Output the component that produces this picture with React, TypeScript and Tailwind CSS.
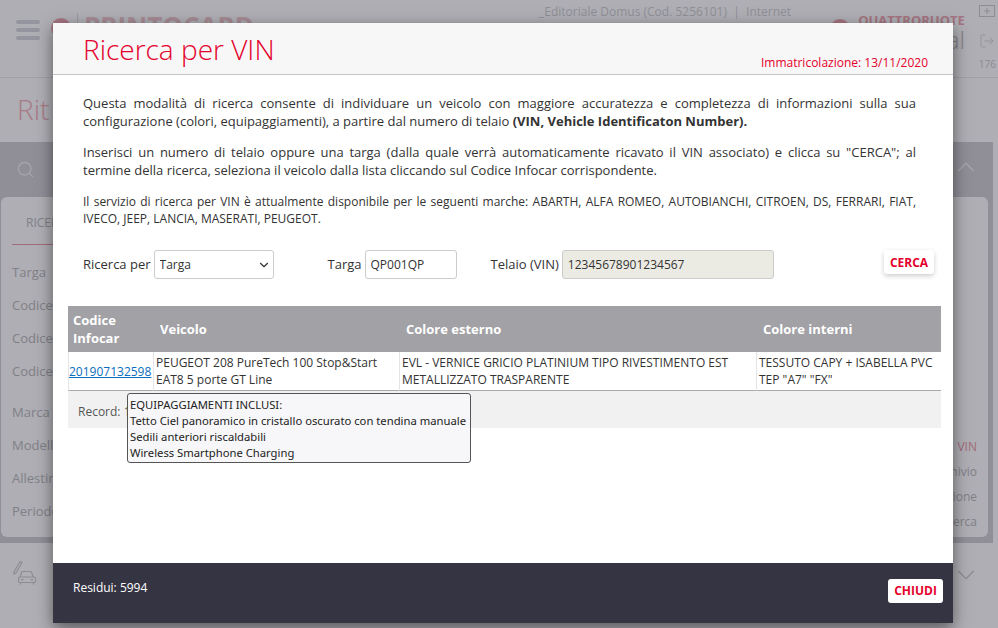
import { ChevronDown, ChevronUp, Search, LogOut } from 'lucide-react';

const leftLabels = [
  { text: 'Targa', gap: 'mt-[16px]' },
  { text: 'Codice', gap: 'mt-[11px]' },
  { text: 'Codice', gap: 'mt-[11px]' },
  { text: 'Codice', gap: 'mt-[11px]' },
  { text: 'Marca', gap: 'mt-[19px]' },
  { text: 'Modello', gap: 'mt-[11px]' },
  { text: 'Allestimento', gap: 'mt-[11px]' },
  { text: 'Periodo', gap: 'mt-[11px]' },
];

function CarPenIcon() {
  return (
    <svg width="26" height="26" viewBox="0 0 26 26" fill="none" stroke="currentColor" strokeWidth="1.2">
      <path d="M1 12 L7 1.5 L9 2.6 L3 13 L1 14 Z" />
      <path d="M7 17 L9 11.5 H18 L20.5 17" />
      <rect x="5.5" y="17" width="17" height="5.5" rx="1.5" />
      <path d="M7.5 22.5 V24.5 M20.5 22.5 V24.5 M8 19.7 H10.5 M17.5 19.7 H20" />
    </svg>
  );
}

function PlusBoxIcon() {
  return (
    <svg width="16" height="12" viewBox="0 0 16 12" fill="none" stroke="currentColor" strokeWidth="1">
      <rect x="0.5" y="0.5" width="15" height="11" />
      <path d="M8 3 V9 M5 6 H11" />
    </svg>
  );
}

function BackgroundPage() {
  return (
    <div className="h-[628px] w-[998px] overflow-hidden bg-white text-[#b4b4b4]">
      {/* top bar */}
      <div className="flex h-[78px] border-b border-[#e8e8e8]">
        <div className="ml-4 mt-5 flex w-6 flex-col gap-[4px]">
          <div className="h-1 rounded-sm bg-[#d6d6dc]" />
          <div className="h-1 rounded-sm bg-[#d6d6dc]" />
          <div className="h-1 rounded-sm bg-[#d6d6dc]" />
        </div>
        <div className="ml-[11px] mt-[18px] h-[20px] w-[20px] rounded-full bg-[#f0a0aa]" />
        <div className="ml-[6px] mt-[13px] h-[24px] w-px bg-[#ddd]" />
        <div className="ml-[6px] mt-[10px] text-[26px] font-bold leading-[32px] text-[#f0c4ca]">PRINTOCARD</div>
        <div className="ml-auto mt-[19px] h-[20px] w-[20px] rounded-full bg-[#f0a0aa]" />
        <div className="ml-[8px] flex flex-col items-end pt-[12px]">
          <span className="text-[13px] font-bold leading-[16px] text-[#f0a0aa]">QUATTRORUOTE</span>
          <span className="text-[24px] font-light leading-[24px]">Digital</span>
        </div>
        <div className="ml-[14px] mr-[2px] flex flex-col items-center pt-[5px] text-[#c8c8c8]">
          <PlusBoxIcon />
          <LogOut size={16} strokeWidth={1.2} className="mt-[16px]" />
          <span className="mt-[8px] text-[10px]">176</span>
        </div>
      </div>
      <div className="h-[64px] pl-[17px] pt-[11px] text-[28px] font-light leading-[40px] text-[#f5aab4]">Rit</div>
      {/* search panel */}
      <div className="h-[401px] w-[993px] bg-[#cdcbd0]">
        <div className="flex h-[55px] items-center justify-between pl-[16px] pr-[12px] text-[#f2f2f2]">
          <Search size={19} strokeWidth={1.5} />
          <ChevronUp size={30} strokeWidth={1} className="mb-[5px]" />
        </div>
        <div className="ml-px flex h-[340px] w-[987px] justify-between rounded-md bg-white">
          <div className="pl-[11px]">
            <div className="ml-[14px] pt-[15px] text-[12px] leading-[22px]">RICERCA</div>
            <div className="mt-[10px] h-px w-[150px] bg-[#eb909c]" />
            {leftLabels.map((l, i) => (
              <div key={i} className={`${l.gap} text-[13px] leading-[22px]`}>{l.text}</div>
            ))}
          </div>
          <div className="mr-[11px] mt-[239px] flex flex-col items-end gap-[3px] text-[12px] leading-[22px]">
            <span className="text-[#eb909c]">VIN</span>
            <span>Archivio</span>
            <span>Opzione</span>
            <span>Ricerca</span>
          </div>
        </div>
      </div>
      <div className="flex items-center justify-between pb-[12px] pl-[13px] pr-[17px] pt-[13px] text-[#c8c8c8]">
        <CarPenIcon />
        <ChevronDown size={30} strokeWidth={1} className="mt-[4px]" />
      </div>
    </div>
  );
}

function VinModal() {
  return (
    <div className="absolute left-[53px] top-[23px] flex h-[600px] w-[900px] flex-col bg-white text-[#333] shadow-[0_5px_15px_rgba(0,0,0,0.5)]">
      <div className="flex h-[52px] items-end justify-between border-b border-[#c3c3c9] bg-[#f7f7f7] pl-[30px] pr-[25px]">
        <h1 className="mb-[3px] text-[28px] font-light leading-[44px] text-[#e4002b]">Ricerca per VIN</h1>
        <span className="mb-[3px] text-[12px] leading-[16px] text-[#e4002b]">Immatricolazione: 13/11/2020</span>
      </div>

      <div className="relative flex-1">
        <div className="pl-[30px] pr-[37px] pt-[19px] text-justify text-[13px] leading-[18px]">
          <p>
            Questa modalità di ricerca consente di individuare un veicolo con maggiore accuratezza e completezza di
            informazioni sulla sua configurazione (colori, equipaggiamenti), a partire dal numero di telaio{' '}
            <b>(VIN, Vehicle Identificaton Number).</b>
          </p>
          <p className="mt-[13px]">
            Inserisci un numero di telaio oppure una targa (dalla quale verrà automaticamente ricavato il VIN associato)
            e clicca su "CERCA"; al termine della ricerca, seleziona il veicolo dalla lista cliccando sul Codice Infocar
            corrispondente.
          </p>
          <p className="mt-[14px] text-[12px] leading-[17px]">
            Il servizio di ricerca per VIN è attualmente disponibile per le seguenti marche: ABARTH, ALFA ROMEO,
            AUTOBIANCHI, CITROEN, DS, FERRARI, FIAT, IVECO, JEEP, LANCIA, MASERATI, PEUGEOT.
          </p>
        </div>

        <div className="mt-[23px] flex items-start pl-[30px] pr-[19px] text-[13px]">
          <label className="mr-[3px] leading-[29px]">Ricerca per</label>
          <div className="relative">
            <select className="h-[29px] w-[120px] appearance-none rounded-[3px] border border-[#ccc] bg-white pl-[5px] text-[12px] text-[#333]">
              <option>Targa</option>
            </select>
            <ChevronDown size={14} strokeWidth={2} className="absolute right-[3px] top-[8px] text-[#333]" />
          </div>
          <label className="ml-[54px] mr-[3px] leading-[29px]">Targa</label>
          <input
            defaultValue="QP001QP"
            className="h-[29px] w-[92px] rounded-[3px] border border-[#ccc] px-[5px] text-[12px]"
          />
          <label className="ml-[34px] mr-[3px] leading-[29px]">Telaio (VIN)</label>
          <input
            readOnly
            defaultValue="12345678901234567"
            className="h-[29px] w-[212px] rounded-[3px] border border-[#ccc] bg-[#ebebe4] px-[5px] text-[12px]"
          />
          <button className="ml-auto h-[24px] w-[50px] rounded-[3px] bg-white pt-px text-[12px] font-bold text-[#e4002b] shadow-[0_2px_5px_rgba(0,0,0,0.2)]">
            CERCA
          </button>
        </div>

        <div className="ml-[15px] mt-[27px] w-[873px] text-[12px]">
          <table className="w-full table-fixed border-separate border-spacing-0">
            <thead>
              <tr className="h-[46px] bg-[#a2a1a6] text-left text-[13px] font-bold leading-[18px] text-white">
                <th className="w-[86px] pl-[5px]">Codice Infocar</th>
                <th className="w-[246px] pl-[6px]">Veicolo</th>
                <th className="w-[357px] pl-[6px]">Colore esterno</th>
                <th className="pl-[6px]">Colore interni</th>
              </tr>
            </thead>
            <tbody>
              <tr className="h-[39px] leading-[17px]">
                <td className="border-x border-b border-x-[#e5e5e5] border-b-[#aaa] pl-0">
                  <a href="#" className="text-[#0a6ebd] underline">201907132598</a>
                </td>
                <td className="border-b border-r border-b-[#aaa] border-r-[#e5e5e5] pl-[2px]">PEUGEOT 208 PureTech 100 Stop&amp;Start EAT8 5 porte GT Line</td>
                <td className="border-b border-r border-b-[#aaa] border-r-[#e5e5e5] pl-[2px]">EVL - VERNICE GRICIO PLATINIUM TIPO RIVESTIMENTO EST METALLIZZATO TRASPARENTE</td>
                <td className="border-b border-b-[#aaa] pl-[2px]">TESSUTO CAPY + ISABELLA PVC TEP "A7" "FX"</td>
              </tr>
            </tbody>
          </table>
          <div className="h-[37px] bg-[#f1f1f1] pl-[10px] leading-[41px] text-[#555]">Record: 1</div>
        </div>

        {/* tooltip of the vehicle row */}
        <div className="absolute left-[74px] top-[318px] h-[70px] w-[344px] whitespace-nowrap rounded-[3px] border border-[#555] bg-[#f7f7f9] pl-[2px] pt-[3px] font-['Noto_Sans',sans-serif] text-[11.25px] leading-[16px] text-[#222]">
          <div>EQUIPAGGIAMENTI INCLUSI:</div>
          <div>Tetto Ciel panoramico in cristallo oscurato con tendina manuale</div>
          <div>Sedili anteriori riscaldabili</div>
          <div>Wireless Smartphone Charging</div>
        </div>
      </div>

      <div className="flex h-[60px] items-start justify-between bg-[#353443] pl-[20px] pr-[10px] pt-[16px]">
        <span className="text-[12px] leading-[17px] text-white">Residui: 5994</span>
        <button className="h-[24px] w-[55px] rounded-[3px] bg-white text-[12px] font-bold text-[#e4002b]">CHIUDI</button>
      </div>
    </div>
  );
}

export default function App() {
  return (
    <div className="relative h-[628px] w-[998px] overflow-hidden font-['Open_Sans',sans-serif]">
      <BackgroundPage />
      <div className="absolute inset-0 bg-[#353443]/40" />
      <div className="absolute left-[539px] top-[4px] text-[12px] leading-[16px] text-[#8e8e94]">
        _Editoriale Domus (Cod. 5256101) &nbsp;|&nbsp; Internet
      </div>
      <VinModal />
    </div>
  );
}
